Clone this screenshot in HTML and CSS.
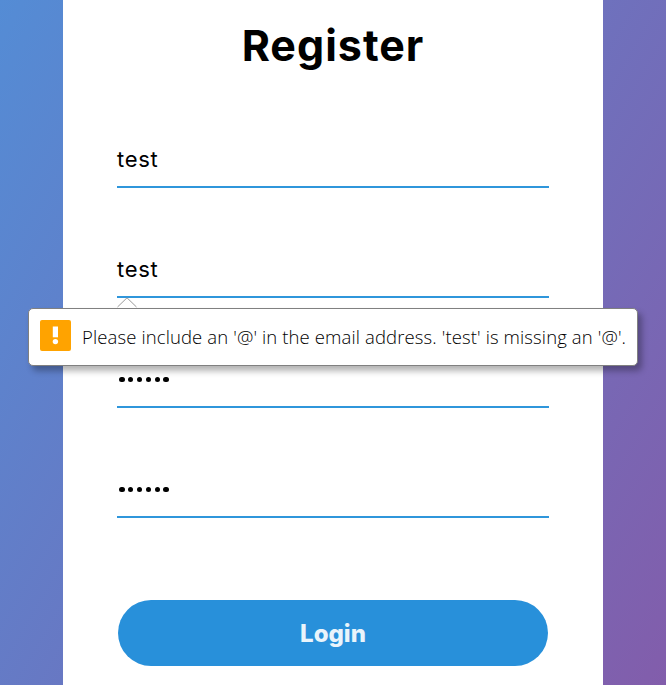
FILE: index.html
```html
<!DOCTYPE html>
<html lang="en">
<head>
<meta charset="utf-8">
<title>Register</title>
<link rel="stylesheet" href="styles.css">
</head>
<body>
<main class="card">
  <h1 class="title"><span>Register</span></h1>
  <form class="form" novalidate>
    <div class="field"><span class="value">test</span></div>
    <div class="field">
      <span class="value">test</span>
      <div class="bubble" role="alert">
        <svg class="arrow" width="20" height="11" viewBox="0 0 20 11"><path d="M0 11 L10 1 L20 11Z" fill="#fff"/><path d="M.5 10 L10 .8 L19.5 10" fill="none" stroke="#999"/></svg>
        <svg class="warning" width="31" height="31" viewBox="0 0 31 31"><rect width="31" height="31" rx="2" fill="#ffa300"/><path d="M12.8 6.5h5.2v10.8h-5.2z" fill="#fff"/><circle cx="15.4" cy="21.6" r="2.7" fill="#fff"/></svg>
        <span class="message">Please include an '@' in the email address. 'test' is missing an '@'.</span>
      </div>
    </div>
    <div class="field"><span class="dots"><i></i><i></i><i></i><i></i><i></i><i></i></span></div>
    <div class="field"><span class="dots"><i></i><i></i><i></i><i></i><i></i><i></i></span></div>
    <button class="submit" type="button">Login</button>
  </form>
</main>
</body>
</html>
```
FILE: styles.css
```css
* { box-sizing: border-box; }
body {
  margin: 0;
  height: 685px;
  overflow: hidden;
  background: linear-gradient(120deg, #548cd5, #825dab);
  font-family: Inter, "Open Sans", sans-serif;
}
.card {
  width: 540px;
  height: 685px;
  margin: 0 auto;
  padding: 0 54px;
  background: #fff;
}
.title {
  margin: 0;
  height: 92px;
  color: #000;
  font-size: 43px;
  line-height: 90px;
  font-weight: 750;
  letter-spacing: 1px;
  text-align: center;
}
.form { padding-top: 30px; }
.field {
  position: relative;
  display: flex;
  align-items: center;
  height: 66px;
  margin-bottom: 44px;
  padding-top: 12px;
  border-bottom: 2px solid #2f96db;
}
.value {
  padding-bottom: 2px;
  color: #000;
  font-size: 22px;
  font-weight: 380;
  line-height: 30px;
  letter-spacing: 0.7px;
}
.dots {
  display: flex;
  gap: 3.4px;
  padding: 0 0 1px 2px;
}
.dots i {
  width: 5.5px;
  height: 5.5px;
  border-radius: 50%;
  background: #000;
}
.bubble {
  position: absolute;
  z-index: 1;
  top: 76px;
  left: -89px;
  display: flex;
  align-items: center;
  gap: 11px;
  width: 610px;
  height: 58px;
  padding: 0 0 4px 11px;
  border: 1px solid #808080;
  border-radius: 5px;
  background: #fff;
  box-shadow: 4px 5px 6px rgba(0, 0, 0, 0.3);
}
.arrow {
  position: absolute;
  top: -12px;
  left: 88px;
}
.message {
  color: #000;
  font-family: "Open Sans", "Noto Sans", sans-serif;
  font-size: 18.5px;
  font-weight: 350;
  line-height: 28px;
  letter-spacing: 0.12px;
  white-space: nowrap;
  padding-top: 4px;
}
.submit {
  display: block;
  width: 430px;
  height: 66px;
  margin: 82px auto 0;
  padding: 2px 0 0;
  border: 0;
  border-radius: 33px;
  background: #2890da;
  color: #e9f4fb;
  font: 800 24px/64px Inter, sans-serif;
}
```
